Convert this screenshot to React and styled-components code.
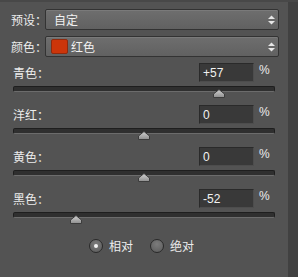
import React from "react";
import styled, { createGlobalStyle } from "styled-components";

const Global = createGlobalStyle`
  html, body { margin: 0; padding: 0; background: #535353; }
  body { font-family: "Noto Sans CJK SC", "Noto Sans", sans-serif; }
`;

const Frame = styled.div`
  display: flex;
  width: 298px;
  height: 277px;
  background: #535353;
  border-top: 2px solid #484848;
  box-sizing: border-box;
`;

const Panel = styled.div`
  width: 288px;
  box-sizing: border-box;
  padding: 7px 9px 0 11px;
  display: flex;
  flex-direction: column;
`;

const Strip = styled.div`
  width: 10px;
  background: #414141;
`;

const SelectRow = styled.div`
  display: flex;
  align-items: center;
  height: 21px;
  margin-bottom: ${(p) => p.$mb || 0}px;
`;

const Label = styled.span`
  font-size: 12px;
  color: #ececec;
  line-height: 1;
  white-space: nowrap;
  width: ${(p) => (p.$w ? p.$w + "px" : "auto")};
  flex: ${(p) => (p.$grow ? 1 : "none")};
`;

const SelectBox = styled.div`
  flex: 1;
  height: 21px;
  box-sizing: border-box;
  border: 1px solid #333333;
  border-radius: 2px;
  background: linear-gradient(#6e6e6e, #616161);
  display: flex;
  align-items: center;
  padding-left: ${(p) => p.$pl}px;
  padding-right: 3px;
  gap: 3px;
  box-shadow: inset 0 1px 0 #7a7a7a;
`;

const SelectText = styled.span`
  flex: 1;
  font-size: 12px;
  color: #f0f0f0;
  line-height: 1;
`;

const Swatch = styled.span`
  width: 17px;
  height: 15px;
  box-sizing: border-box;
  border-radius: 2px;
  background: #cc350a;
  border: 1px solid #8e2a0e;
`;

const Arrows = () => (
  <svg width="7" height="10" viewBox="0 0 7 10">
    <polygon points="0,4 3.5,0.5 7,4" fill="#e6e6e6" />
    <polygon points="0,6 3.5,9.5 7,6" fill="#e6e6e6" />
  </svg>
);

const Group = styled.div`
  height: 42px;
  margin: 0 4px 0 2px;
  display: flex;
  flex-direction: column;
`;

const Header = styled.div`
  display: flex;
  align-items: center;
  height: 19px;
`;

const NumBox = styled.div`
  width: 55px;
  height: 19px;
  box-sizing: border-box;
  background: #393939;
  border: 1px solid #2a2a2a;
  border-right-color: #4d4d4d;
  border-bottom-color: #4d4d4d;
  font-family: "Liberation Sans", Arial, sans-serif;
  font-size: 12px;
  color: #f2f2f2;
  display: flex;
  align-items: center;
  padding-left: 3px;
`;

const Pct = styled.span`
  width: 16px;
  margin-left: 5px;
  font-family: "Liberation Sans", Arial, sans-serif;
  font-size: 12px;
  color: #ececec;
  align-self: flex-start;
  line-height: 14px;
`;

const Track = styled.div`
  position: relative;
  margin-top: 4px;
  height: 6px;
  box-sizing: border-box;
  background: #2f2f2f;
  border: 1px solid #1e1e1e;
  border-bottom-color: #6c6c6c;
  border-radius: 2px;
`;

const ThumbWrap = styled.div`
  position: absolute;
  top: 2px;
  width: 12px;
  height: 9px;
  display: flex;
`;

const Thumb = ({ left }) => (
  <ThumbWrap style={{ left }}>
    <svg width="12" height="9" viewBox="0 0 12 9">
      <defs>
        <linearGradient id="tg" x1="0" y1="0" x2="0" y2="1">
          <stop offset="0" stopColor="#d2d2d2" />
          <stop offset="1" stopColor="#8e8e8e" />
        </linearGradient>
      </defs>
      <polygon points="6,0.5 11.5,5 11.5,8.5 0.5,8.5 0.5,5" fill="url(#tg)" stroke="#3c3c3c" strokeWidth="1" />
    </svg>
  </ThumbWrap>
);

const RadioRow = styled.div`
  display: flex;
  align-items: center;
  margin-top: 8px;
  padding-left: 78px;
  height: 14px;
`;

const RadioItem = styled.div`
  display: flex;
  align-items: center;
  gap: 6px;
  margin-right: ${(p) => p.$mr || 0}px;
`;

const RadioCircle = styled.span`
  width: 14px;
  height: 14px;
  box-sizing: border-box;
  border-radius: 50%;
  border: 1px solid #2a2a2a;
  background: radial-gradient(circle at 50% 35%, #7c7c7c, #5a5a5a);
  display: flex;
  align-items: center;
  justify-content: center;
  &::after {
    content: "";
    width: 4px;
    height: 4px;
    border-radius: 50%;
    background: #f4f4f4;
    display: ${(p) => (p.$on ? "block" : "none")};
  }
`;

const sliders = [
  { name: "青色", value: 57, text: "+57" },
  { name: "洋红", value: 0, text: "0" },
  { name: "黄色", value: 0, text: "0" },
  { name: "黑色", value: -52, text: "-52" },
];

const TRACK_W = 262;

export default function App() {
  return (
    <>
      <Global />
      <Frame>
        <Panel>
          <SelectRow $mb={6}>
            <Label $w={34}>预设：</Label>
            <SelectBox $pl={8}>
              <SelectText>自定</SelectText>
              <Arrows />
            </SelectBox>
          </SelectRow>
          <SelectRow $mb={6}>
            <Label $w={34}>颜色：</Label>
            <SelectBox $pl={5}>
              <Swatch />
              <SelectText>红色</SelectText>
              <Arrows />
            </SelectBox>
          </SelectRow>
          {sliders.map((s) => (
            <Group key={s.name}>
              <Header>
                <Label $grow>{s.name}：</Label>
                <NumBox>{s.text}</NumBox>
                <Pct>%</Pct>
              </Header>
              <Track>
                <Thumb left={((s.value + 100) / 200) * TRACK_W - 7} />
              </Track>
            </Group>
          ))}
          <RadioRow>
            <RadioItem $mr={17}>
              <RadioCircle $on />
              <Label>相对</Label>
            </RadioItem>
            <RadioItem>
              <RadioCircle />
              <Label>绝对</Label>
            </RadioItem>
          </RadioRow>
        </Panel>
        <Strip />
      </Frame>
    </>
  );
}
